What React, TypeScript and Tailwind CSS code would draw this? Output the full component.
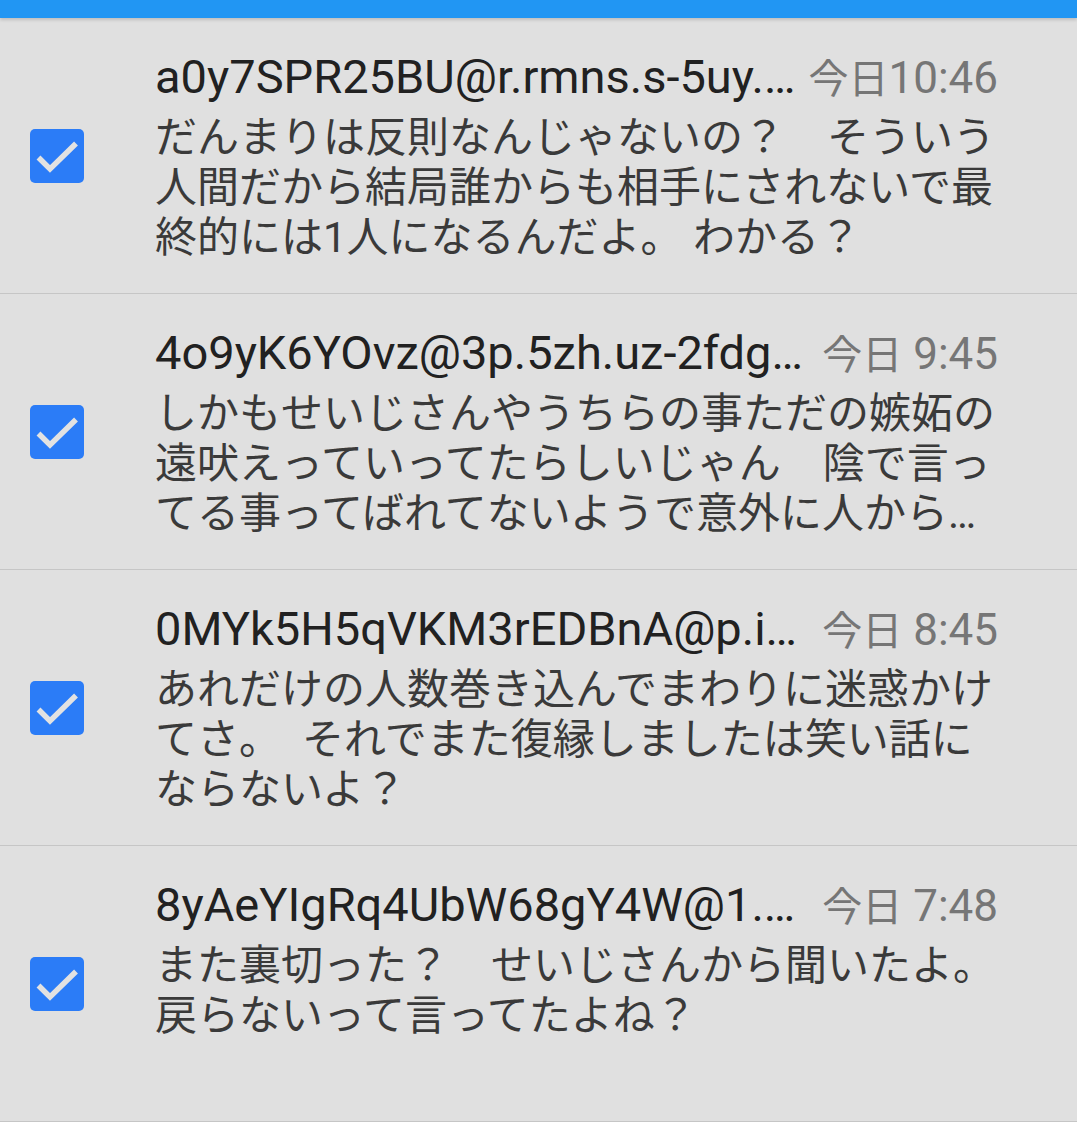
import React from "react";

type Mail = { from: string; day: string; time: string; lines: string[] };

const mails: Mail[] = [
  {
    from: "a0y7SPR25BU@r.rmns.s-5uy.…",
    day: "今日",
    time: "10:46",
    lines: [
      "だんまりは反則なんじゃないの？　そういう",
      "人間だから結局誰からも相手にされないで最",
      "終的には1人になるんだよ。 わかる？",
    ],
  },
  {
    from: "4o9yK6YOvz@3p.5zh.uz-2fdg…",
    day: "今日",
    time: " 9:45",
    lines: [
      "しかもせいじさんやうちらの事ただの嫉妬の",
      "遠吠えっていってたらしいじゃん　陰で言っ",
      "てる事ってばれてないようで意外に人から…",
    ],
  },
  {
    from: "0MYk5H5qVKM3rEDBnA@p.i…",
    day: "今日",
    time: " 8:45",
    lines: [
      "あれだけの人数巻き込んでまわりに迷惑かけ",
      "てさ。　それでまた復縁しましたは笑い話に",
      "ならないよ？",
    ],
  },
  {
    from: "8yAeYIgRq4UbW68gY4W@1.…",
    day: "今日",
    time: " 7:48",
    lines: ["また裏切った？　せいじさんから聞いたよ。", "戻らないって言ってたよね？"],
  },
];

function Check() {
  return (
    <div className="w-[54px] h-[54px] rounded-[5px] bg-[#2b7cf7] shrink-0">
      <svg width="54" height="54" viewBox="0 0 54 54">
        <polyline
          points="8.5,28.5 20,40 46,14.5"
          fill="none"
          stroke="#e2e2e2"
          strokeWidth="5.5"
        />
      </svg>
    </div>
  );
}

export default function App() {
  return (
    <div
      className="w-[1077px] h-[1146px] bg-white overflow-hidden"
      style={{ fontFamily: "Roboto, 'Noto Sans CJK JP', sans-serif" }}
    >
      <div className="h-[18px] bg-[#2196f3] shadow-[0_2px_3px_rgba(0,0,0,0.15)] relative z-10" />
      <div className="bg-[#e0e0e0]">
        {mails.map((m, i) => (
          <div
            key={i}
            className="h-[276px] flex items-center border-b border-[#c6c6c6]"
          >
            <div className="w-[155px] pl-[30px] flex items-center shrink-0">
              <Check />
            </div>
            <div className="self-start pt-[34px] w-[843px]">
              <div className="flex items-baseline h-[52px]">
                <div className="shrink-0 whitespace-nowrap text-[47px] leading-[50px] text-[#212121]">
                  {m.from}
                </div>
                <div className="ml-auto pl-[6px] shrink-0 whitespace-pre leading-[50px] text-[#767676]">
                  <span className="text-[40px]">{m.day}</span>
                  <span className="text-[44px]">{m.time}</span>
                </div>
              </div>
              <div className="mt-[9px] text-[42px] leading-[50px] text-[#3a3a3a]">
                {m.lines.map((l, j) => (
                  <div key={j} className="whitespace-nowrap">
                    {l}
                  </div>
                ))}
              </div>
            </div>
          </div>
        ))}
      </div>
    </div>
  );
}
